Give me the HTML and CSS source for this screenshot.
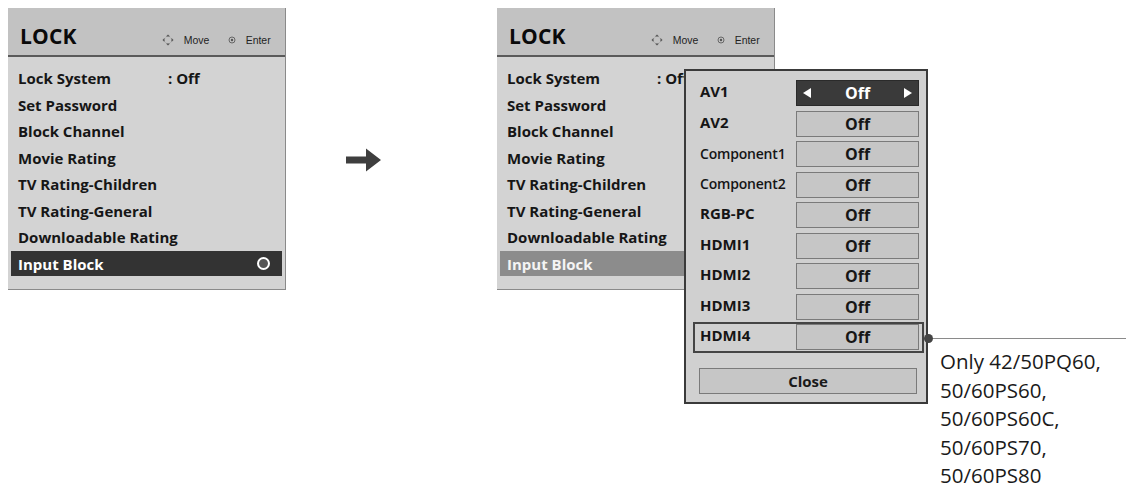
FILE: index.html
```html
<!DOCTYPE html>
<html>
<head>
<meta charset="utf-8">
<link rel="stylesheet" href="styles.css">
</head>
<body>
<div class="page">
  <div class="menu">
    <div class="menu-head">
      <span class="title">LOCK</span>
      <span class="hint">
        <svg class="ico-move" viewBox="0 0 12 12" width="12" height="12"><circle cx="6" cy="6" r="3.6" fill="none" stroke="#999" stroke-width="0.8" stroke-dasharray="1 1"/><path d="M6 0.5 L8 2.5 H4 Z M6 11.5 L4 9.5 H8 Z M0.5 6 L2.5 4 V8 Z M11.5 6 L9.5 8 V4 Z" fill="#555"/></svg>
        <span class="hint-txt">Move</span>
        <svg class="ico-enter" viewBox="0 0 8 8" width="8" height="8"><circle cx="4" cy="4" r="3" fill="none" stroke="#666" stroke-width="1"/><circle cx="4" cy="4" r="1.2" fill="#555"/></svg>
        <span class="hint-txt">Enter</span>
      </span>
    </div>
    <ul class="items">
      <li><span class="lbl">Lock System</span><span class="val">: Off</span></li>
      <li>Set Password</li>
      <li>Block Channel</li>
      <li>Movie Rating</li>
      <li>TV Rating-Children</li>
      <li>TV Rating-General</li>
      <li>Downloadable Rating</li>
      <li class="sel">Input Block<span class="ok"></span></li>
    </ul>
  </div>

  <div class="arrow">
    <svg viewBox="0 0 35 24" width="35" height="24"><path d="M0 8.5 H20 V0.5 L35 12 L20 23.5 V15.5 H0 Z" fill="#3e3e3e"/></svg>
  </div>

  <div class="stage">
    <div class="menu">
      <div class="menu-head">
        <span class="title">LOCK</span>
        <span class="hint">
          <svg class="ico-move" viewBox="0 0 12 12" width="12" height="12"><circle cx="6" cy="6" r="3.6" fill="none" stroke="#999" stroke-width="0.8" stroke-dasharray="1 1"/><path d="M6 0.5 L8 2.5 H4 Z M6 11.5 L4 9.5 H8 Z M0.5 6 L2.5 4 V8 Z M11.5 6 L9.5 8 V4 Z" fill="#555"/></svg>
          <span class="hint-txt">Move</span>
          <svg class="ico-enter" viewBox="0 0 8 8" width="8" height="8"><circle cx="4" cy="4" r="3" fill="none" stroke="#666" stroke-width="1"/><circle cx="4" cy="4" r="1.2" fill="#555"/></svg>
          <span class="hint-txt">Enter</span>
        </span>
      </div>
      <ul class="items">
        <li><span class="lbl">Lock System</span><span class="val">: Off</span></li>
        <li>Set Password</li>
        <li>Block Channel</li>
        <li>Movie Rating</li>
        <li>TV Rating-Children</li>
        <li>TV Rating-General</li>
        <li>Downloadable Rating</li>
        <li class="sel2">Input Block</li>
      </ul>
    </div>

    <div class="popup">
      <div class="prow"><span class="plbl">AV1</span><span class="btn on"><span class="tri l"></span>Off<span class="tri r"></span></span></div>
      <div class="prow"><span class="plbl">AV2</span><span class="btn">Off</span></div>
      <div class="prow"><span class="plbl small">Component1</span><span class="btn">Off</span></div>
      <div class="prow"><span class="plbl small">Component2</span><span class="btn">Off</span></div>
      <div class="prow"><span class="plbl">RGB-PC</span><span class="btn">Off</span></div>
      <div class="prow"><span class="plbl">HDMI1</span><span class="btn">Off</span></div>
      <div class="prow"><span class="plbl">HDMI2</span><span class="btn">Off</span></div>
      <div class="prow"><span class="plbl">HDMI3</span><span class="btn">Off</span></div>
      <div class="prow boxed"><span class="plbl">HDMI4</span><span class="btn">Off</span></div>
      <div class="close">Close</div>
    </div>

    <div class="callout-line"><span class="dot"></span></div>
    <div class="callout-text">Only 42/50PQ60,<br>50/60PS60,<br>50/60PS60C,<br>50/60PS70,<br>50/60PS80</div>
  </div>
</div>
</body>
</html>
```

FILE: styles.css
```css
* { box-sizing: border-box; }
html, body { margin: 0; padding: 0; background: #fff; }
body { width: 1126px; height: 490px; overflow: hidden; font-family: "Open Sans", "Liberation Sans", sans-serif; color: #111; }

.page {
  display: flex;
  align-items: flex-start;
  padding: 8px 0 0 8px;
}

.menu {
  width: 278px;
  height: 282px;
  background: #d3d3d3;
  border-right: 1px solid #8a8a8a;
  border-bottom: 1px solid #8a8a8a;
  flex: none;
}

.menu-head {
  height: 49px;
  background: #c2c2c2;
  border-bottom: 2px solid #5a5a5a;
  display: flex;
  align-items: flex-end;
  padding: 0 0 6px 12px;
}
.title {
  font-size: 21px;
  font-weight: 700;
  letter-spacing: 0.2px;
  line-height: 26px;
  color: #0a0a0a;
}
.hint {
  display: flex;
  align-items: center;
  margin-left: auto;
  margin-right: 14px;
  margin-bottom: 3px;
  color: #222;
}
.ico-move { margin-right: 9px; margin-left: -6px; }
.ico-enter { margin-left: 18px; margin-right: 9px; }
.hint-txt { font-family: "Liberation Sans", sans-serif; font-size: 11px; transform: scaleX(0.95); }

.items {
  list-style: none;
  margin: 0;
  padding: 8px 3px 0 3px;
}
.items li {
  height: 26.5px;
  display: flex;
  align-items: center;
  padding-left: 7px;
  font-size: 15px;
  font-weight: 700;
  color: #161616;
  white-space: nowrap;
}
.lbl { width: 150px; }
.items li.sel {
  background: #333;
  color: #fff;
  height: 25px;
  margin-top: 0.75px;
}
.ok {
  margin-left: auto;
  margin-right: 12px;
  width: 13px;
  height: 13px;
  border-radius: 50%;
  border: 2.5px solid #fff;
  background: #555;
}
.items li.sel2 {
  background: #8c8c8c;
  color: #f4f4f4;
  height: 25px;
  margin-top: 0.75px;
}

.arrow {
  flex: none;
  margin: 140px 116px 0 60px;
  width: 35px;
  height: 24px;
  display: flex;
}

.stage {
  position: relative;
  flex: 1;
  height: 482px;
}

.popup {
  position: absolute;
  left: 187px;
  top: 61px;
  width: 244px;
  height: 335px;
  background: #d0d0d0;
  border: 2px solid #3a3a3a;
  padding: 7px 2px 8px 7px;
  display: flex;
  flex-direction: column;
}
.prow {
  height: 30.5px;
  border: 2px solid transparent;
  display: flex;
  align-items: center;
  padding: 0 3px 0 5px;
  flex: none;
}
.prow.boxed { border-color: #444; }
.plbl {
  flex: 1;
  font-size: 15px;
  font-weight: 700;
  color: #151515;
  white-space: nowrap;
  margin-top: -4px;
}
.plbl.small { font-size: 14px; font-weight: 600; margin-top: -2px; letter-spacing: -0.2px; }
.btn {
  width: 123px;
  height: 26px;
  background: #c6c6c6;
  border: 1px solid #7a7a7a;
  display: flex;
  align-items: center;
  justify-content: center;
  font-size: 16px;
  font-weight: 700;
  color: #161616;
  position: relative;
}
.btn.on { background: #3a3a3a; border-color: #2a2a2a; color: #fff; }
.tri {
  position: absolute;
  top: 50%;
  margin-top: -5px;
  width: 0; height: 0;
  border-top: 5px solid transparent;
  border-bottom: 5px solid transparent;
}
.tri.l { left: 6px; border-right: 8px solid #fff; }
.tri.r { right: 6px; border-left: 8px solid #fff; }

.close {
  margin: 15.5px 7px 0 6px;
  height: 26px;
  background: #c6c6c6;
  border: 1px solid #7a7a7a;
  display: flex;
  align-items: center;
  justify-content: center;
  font-size: 15px;
  font-weight: 700;
  color: #1a1a1a;
}

.callout-line {
  position: absolute;
  left: 431px;
  top: 330px;
  width: 198px;
  height: 1px;
  background: #8a8a8a;
}
.dot {
  position: absolute;
  left: -4px;
  top: -4px;
  width: 9px;
  height: 9px;
  border-radius: 50%;
  background: #444;
}
.callout-text {
  position: absolute;
  left: 443px;
  top: 339px;
  font-size: 20.5px;
  line-height: 28.5px;
  color: #1a1a1a;
  white-space: nowrap;
}
```
